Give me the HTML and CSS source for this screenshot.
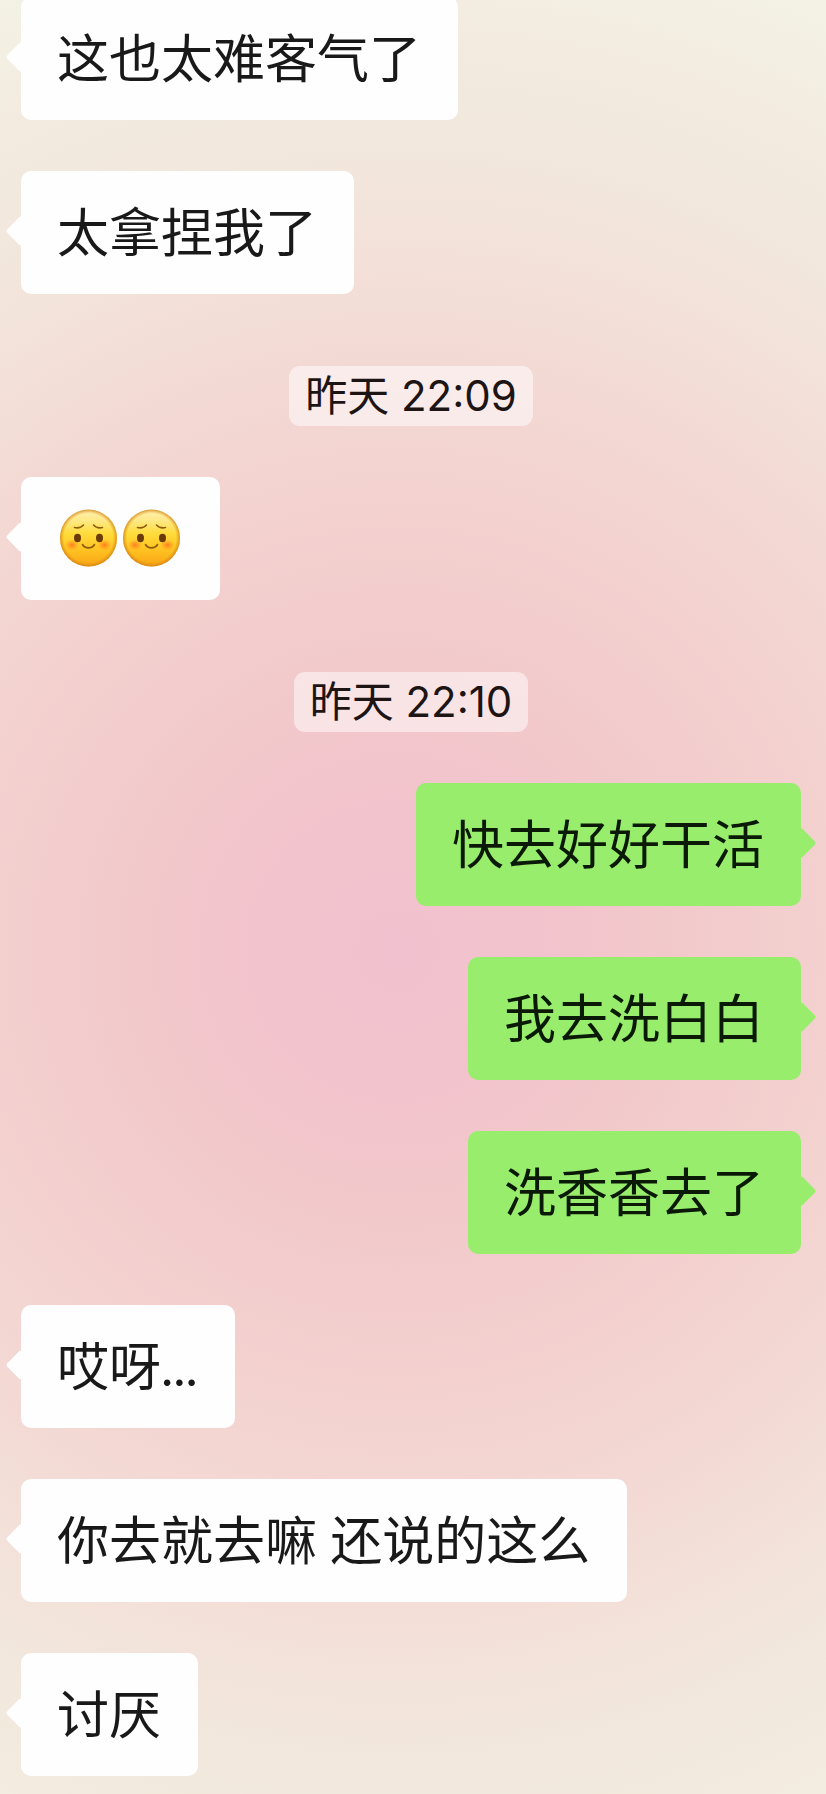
FILE: index.html
```html
<!DOCTYPE html>
<html lang="zh-CN">
<head>
<meta charset="utf-8">
<meta name="viewport" content="width=device-width, initial-scale=1">
<title>聊天</title>
<link rel="stylesheet" href="styles.css">
</head>
<body>
<svg class="defs" aria-hidden="true">
  <defs>
    <linearGradient id="skin" x1="0" y1="0" x2="0" y2="1">
      <stop offset="0" stop-color="#fff0b0"/>
      <stop offset="0.2" stop-color="#ffe884"/>
      <stop offset="0.42" stop-color="#ffdc3c"/>
      <stop offset="0.7" stop-color="#ffc322"/>
      <stop offset="1" stop-color="#f9a414"/>
    </linearGradient>
    <radialGradient id="rim">
      <stop offset="0.86" stop-color="#d98a12" stop-opacity="0"/>
      <stop offset="1" stop-color="#d08418" stop-opacity="0.8"/>
    </radialGradient>
    <radialGradient id="blush">
      <stop offset="0" stop-color="#ff7420" stop-opacity="0.9"/>
      <stop offset="1" stop-color="#ff8a1c" stop-opacity="0"/>
    </radialGradient>
    <symbol id="shy" viewBox="0 0 62 58">
      <circle cx="31" cy="29" r="28.5" fill="url(#skin)"/>
      <circle cx="31" cy="29" r="28.5" fill="url(#rim)"/>
      <ellipse cx="14.500" cy="36" rx="7" ry="5.500" fill="url(#blush)"/>
      <ellipse cx="47" cy="36" rx="7" ry="5.500" fill="url(#blush)"/>
      <ellipse cx="20" cy="29" rx="3.500" ry="4.200" fill="#6a3a08"/>
      <ellipse cx="42" cy="29" rx="3.500" ry="4.200" fill="#6a3a08"/>
      <g fill="none" stroke="#8f5c0e" stroke-width="1.600" stroke-linecap="round">
        <path d="M17 18.500C20.500 19.300 24 18.300 26 16"/>
        <path d="M45 18.500C41.500 19.300 38 18.300 36 16"/>
        <path d="M25 35.500C27.500 40 34.500 40 37 35.500"/>
      </g>
    </symbol>
  </defs>
</svg>
<main class="chat">
  <p class="bubble bubble-in bubble-cut">这也太难客气了</p>
  <p class="bubble bubble-in">太拿捏我了</p>
  <time class="stamp">昨天 22:09</time>
  <p class="bubble bubble-in">
    <svg class="emoji" role="img" aria-label="害羞"><use href="#shy"/></svg><svg class="emoji" role="img" aria-label="害羞"><use href="#shy"/></svg>
  </p>
  <time class="stamp">昨天 22:10</time>
  <p class="bubble bubble-out">快去好好干活</p>
  <p class="bubble bubble-out">我去洗白白</p>
  <p class="bubble bubble-out">洗香香去了</p>
  <p class="bubble bubble-in">哎呀...</p>
  <p class="bubble bubble-in">你去就去嘛 还说的这么</p>
  <p class="bubble bubble-in">讨厌</p>
</main>
</body>
</html>
```

FILE: styles.css
```css
* {
  box-sizing: border-box;
}

body {
  margin: 0;
  background: radial-gradient(circle farthest-corner at 48% 53%,
    #f2c1cf 0%,
    #f2c3cc 14%,
    #f2c9cb 26%,
    #f3d1cf 42%,
    #f3dad5 58%,
    #f3e2da 68%,
    #f2e8dd 78%,
    #f3ebdf 88%,
    #f3f0e3 94%,
    #f3f2e4 100%);
}

.defs {
  position: absolute;
  width: 0;
  height: 0;
}

.chat {
  display: flex;
  flex-direction: column;
  gap: 51px;
  padding: 0 25px 18px 21px;
  overflow: hidden;
}

.bubble {
  position: relative;
  display: flex;
  align-items: center;
  min-height: 123px;
  margin: 0;
  padding: 25px 37px 26px 36px;
  border-radius: 10px;
  color: #191919;
  font: 52px/72px Lato, "Noto Sans CJK SC", sans-serif;
}

.bubble::before {
  content: "";
  position: absolute;
  top: 50%;
  width: 22px;
  height: 22px;
  margin-top: -13px;
  border-radius: 3px;
  background: inherit;
  transform: rotate(45deg);
}

.bubble-in {
  align-self: flex-start;
  background: #fefefe;
}

.bubble-in::before {
  left: -11px;
}

.bubble-out {
  align-self: flex-end;
  background: #98ee6c;
  color: #0b1a06;
}

.bubble-out::before {
  right: -11px;
}

/* The oldest message is scrolled slightly past the top edge. */
.bubble-cut {
  margin-top: -3px;
}

.emoji {
  width: 63px;
  height: 58px;
}

.stamp {
  align-self: center;
  margin-top: 21px;
  padding: 0 16px;
  border-radius: 11px;
  background: rgba(255, 255, 255, 0.5);
  color: #1d1414;
  font: 42px/60px Inter, "Noto Sans CJK SC", sans-serif;
}
```
